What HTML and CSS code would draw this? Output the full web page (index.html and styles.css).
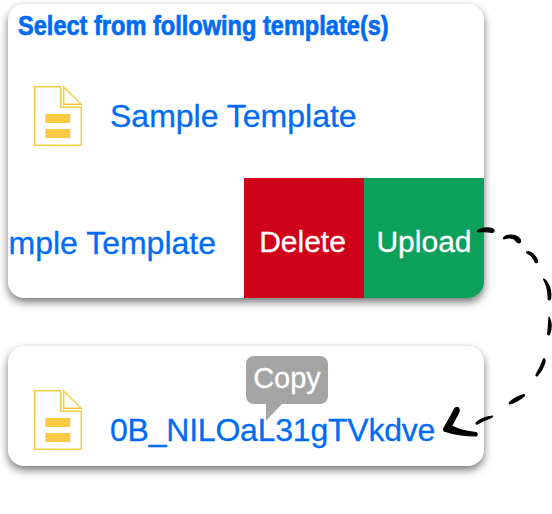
FILE: index.html
```
<!DOCTYPE html>
<html lang="en">
<head>
<meta charset="utf-8">
<title>Templates</title>
<link rel="stylesheet" href="styles.css">
</head>
<body>
<svg class="defs" width="0" height="0" aria-hidden="true">
  <symbol id="doc" viewBox="0 0 50 62">
    <path d="M1.700 1.700H27.700V22.300H48.300V60.300H1.700ZM30.700 2V19.300H48.200Z" fill="none" stroke="#fbca45" stroke-width="1.5"/>
    <path d="M12.300 29H37.300V38H12.300ZM12.300 44H37.300V53H12.300Z" fill="#fbca45"/>
  </symbol>
</svg>
<main class="page">
  <section class="card list">
    <h1 class="title"><span>Select from following template(s)</span></h1>
    <div class="row">
      <svg class="icon"><use href="#doc"/></svg>
      <span class="name">Sample Template</span>
    </div>
    <div class="row swiped">
      <span class="name slid">mple Template</span>
      <div class="action delete">Delete</div>
      <div class="action upload">Upload</div>
    </div>
  </section>
  <section class="card result">
    <div class="row">
      <svg class="icon"><use href="#doc"/></svg>
      <span class="name id">0B_NILOaL31gTVkdve</span>
    </div>
    <div class="tip">Copy<svg class="tail" width="17" height="18"><path d="M0 0H17L0 17.500Z" fill="#a4a4a4"/></svg></div>
  </section>
  <svg class="arrow" viewBox="0 0 552 514" aria-hidden="true">
    <path d="M477.500 231Q478 229 485 228Q492 227.500 494 230Q494.500 232 492 232.500Q486 231 478 232Z"/>
    <path d="M503.500 238Q505 235 511 235Q517 235 520 239Q521.500 242 519 243Q516 242 514 239Q509 237 504 239Z"/>
    <path d="M526.500 252Q529 250.500 533 254Q538 259 537.500 262Q536 263.500 535 262Q533 256 527 253Z"/>
    <path d="M543.500 279Q546 279 549.500 287Q551.500 292 550.500 299Q549 301 548 299Q549 290 543.500 279Z"/>
    <path d="M549 317Q553 324 549.700 334Q548.500 336 547.700 334Q548.500 325 549 317Z"/>
    <path d="M543.500 359Q545.300 358 545 362Q542.500 370 537 376Q535.500 376 536.300 374Q541 367 543.500 359Z"/>
    <path d="M509.500 402.500Q515 397 524 394.500Q525 395 524 396Q518 401.500 510 404Q509 404 509.500 402.500Z"/>
    <path d="M476 423Q481 417.500 492.500 416Q493 417 491 417.700Q483 420.500 477 424.200Q476 424 476 423Z"/>
    <path d="M454.500 409Q456 406.500 458.500 408Q460 410 458.500 413L451.500 426Q462 431.300 476 432.500Q478 434 476.500 436Q458 436 444 431Q443 429 444.500 427Q450 418 454.500 409Z"/>
  </svg>
</main>
</body>
</html>
```
FILE: styles.css
```
* { box-sizing: border-box; }
body { margin: 0; background: #fff; font-family: "Liberation Sans", Arial, sans-serif; }
.defs { display: block; }
.page { position: relative; width: 552px; height: 514px; padding: 4px 0 0 8px; overflow: hidden; }
.card {
  width: 476px;
  background: #fff;
  border-radius: 16px;
  box-shadow: 0 4px 9px rgba(0, 0, 0, .55);
}
.list { height: 294px; overflow: hidden; }
.result { position: relative; height: 120px; margin-top: 48px; padding-top: 14px; }
.title { height: 52px; margin: 0; padding: 3px 0 0 10px; color: #006cf5; font-size: 28px; line-height: 38px; white-space: nowrap; }
.title span { display: inline-block; transform: scaleX(.842); transform-origin: 0 50%; -webkit-text-stroke: .7px; }
.row { display: flex; align-items: center; height: 120px; padding-left: 25px; }
.icon { display: block; width: 50px; height: 62px; margin-right: 27px; flex: none; }
.name { color: #006cf5; font-size: 32px; line-height: 40px; white-space: nowrap; -webkit-text-stroke: .3px; }
.id { padding-top: 19px; letter-spacing: -.22px; }
.swiped { margin-top: 2px; padding: 0; }
.slid { width: 236px; padding: 9px 28px 0 0; text-align: right; }
.action { width: 120px; height: 120px; padding-top: 4px; color: #fff; font-size: 30px; line-height: 120px; text-align: center; -webkit-text-stroke: .3px; }
.delete { background: #d0021b; padding-right: 3px; }
.upload { background: #0ba15d; }
.tip {
  position: absolute; left: 238px; top: 10px;
  width: 82px; height: 48px;
  border-radius: 8px;
  background: #a4a4a4; color: #fff;
  font-size: 29px; line-height: 44px; text-align: center;
  -webkit-text-stroke: .3px;
}
.tail { position: absolute; left: 20px; top: 47px; }
.arrow { position: absolute; inset: 0; width: 552px; height: 514px; stroke: #000; stroke-width: 1.2; stroke-linejoin: round; }
```
